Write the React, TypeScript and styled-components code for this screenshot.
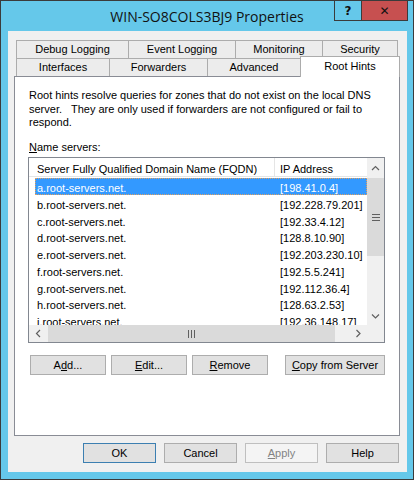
import React from 'react';
import styled, { createGlobalStyle, css } from 'styled-components';

const Global = createGlobalStyle`
  html, body { margin: 0; padding: 0; background: #ffffff; }
  body {
    font-family: "Liberation Sans", Arial, sans-serif;
    font-size: 11px;
    color: #000;
  }
  * { box-sizing: border-box; }
`;

const Window = styled.div`
  width: 414px;
  height: 480px;
  background: #65c8ea;
  border: 1px solid #3b3b3b;
  display: flex;
  flex-direction: column;
`;

const TitleBar = styled.div`
  height: 30px;
  display: grid;
  grid-template-columns: 1fr auto 1fr;
`;

const Title = styled.div`
  grid-column: 2;
  font-family: "Open Sans", "Noto Sans", sans-serif;
  font-size: 14px;
  line-height: 30px;
  color: #111;
  white-space: nowrap;
  padding-top: 1px;
`;

const Controls = styled.div`
  grid-column: 3;
  justify-self: end;
  align-self: start;
  margin-right: 5px;
  display: flex;
  border: 1px solid #3b3b3b;
  border-top: none;
  height: 20px;
`;

const CtrlButton = styled.div<{ $close?: boolean }>`
  width: ${(p) => (p.$close ? 45 : 27)}px;
  height: 19px;
  display: flex;
  align-items: center;
  justify-content: center;
  background: ${(p) => (p.$close ? '#c75050' : 'transparent')};
  ${(p) =>
    !p.$close &&
    css`
      border-right: 1px solid #3b3b3b;
    `}
  font-family: "DejaVu Sans", sans-serif;
  font-weight: bold;
  font-size: 12px;
  color: #111;
`;

const Client = styled.div`
  margin: 0 6px 7px 7px;
  height: 441px;
  background: #f0f0f0;
  padding: 9px 7px 9px 6px;
  display: flex;
  flex-direction: column;
`;

const TabStrip = styled.div`
  margin-left: 2px;
  display: flex;
  flex-direction: column;
`;

const TabRow = styled.div`
  display: flex;
  align-items: flex-start;
  height: 18px;
`;

const Tab = styled.div<{ $w: number; $active?: boolean }>`
  width: ${(p) => p.$w}px;
  height: 18px;
  margin-right: -1px;
  border: 1px solid #acacac;
  border-bottom: none;
  background: #ececec;
  text-align: center;
  line-height: 17px;
  white-space: nowrap;
  ${(p) =>
    p.$active &&
    css`
      position: relative;
      z-index: 1;
      height: 21px;
      margin-top: -2px;
      margin-bottom: -1px;
      background: #ffffff;
      line-height: 18px;
    `}
`;

const Panel = styled.div`
  height: 360px;
  background: #ffffff;
  border: 1px solid #898c95;
  padding: 12px 14px 0 13px;
  display: flex;
  flex-direction: column;
`;

const Description = styled.div`
  padding-left: 1px;
  line-height: 13.5px;
  white-space: pre;
`;

const Label = styled.div`
  margin-top: 11px;
  padding-left: 1px;
  line-height: 13px;
`;

const ListBox = styled.div`
  margin-top: 3.5px;
  width: 357px;
  height: 186px;
  border: 1px solid #828790;
  display: grid;
  grid-template-columns: 1fr 17px;
  grid-template-rows: 1fr 17px;
  background: #fff;
`;

const Viewport = styled.div`
  overflow: hidden;
  display: flex;
  flex-direction: column;
`;

const HeaderRow = styled.div`
  display: grid;
  grid-template-columns: 246px 1fr;
  height: 19px;
  border-bottom: 1px solid #e5e5e5;
  flex-shrink: 0;
`;

const HeaderCell = styled.div<{ $first?: boolean }>`
  padding: 5px 0 0 ${(p) => (p.$first ? 8 : 5)}px;
  line-height: 13px;
  white-space: nowrap;
  ${(p) =>
    p.$first &&
    css`
      border-right: 1px solid #e5e5e5;
    `}
`;

const Rows = styled.div`
  margin-top: 1px;
  display: flex;
  flex-direction: column;
`;

const Row = styled.div<{ $selected?: boolean }>`
  margin-left: 6px;
  height: 16.75px;
  flex-shrink: 0;
  display: grid;
  grid-template-columns: 239px 1fr;
  align-items: center;
  white-space: nowrap;
  border: 1px solid transparent;
  ${(p) =>
    p.$selected &&
    css`
      background: #3399ff;
      color: #fff;
      border: 1px dotted #e0a060;
    `}
`;

const Cell = styled.div<{ $ip?: boolean }>`
  padding-left: ${(p) => (p.$ip ? 5 : 1)}px;
  line-height: 13px;
  padding-top: 3px;
`;

const VScroll = styled.div`
  display: flex;
  flex-direction: column;
  background: #f0f0f0;
`;

const HScroll = styled.div`
  display: flex;
  background: #f0f0f0;
`;

const ArrowBtn = styled.div<{ $w?: number; $h?: number }>`
  width: ${(p) => (p.$w ? `${p.$w}px` : '100%')};
  height: ${(p) => (p.$h ? `${p.$h}px` : '100%')};
  flex-shrink: 0;
  display: flex;
  align-items: center;
  justify-content: center;
  background: #f0f0f0;
`;

const Thumb = styled.div<{ $w?: number; $h?: number }>`
  width: ${(p) => (p.$w ? `${p.$w}px` : '100%')};
  height: ${(p) => (p.$h ? `${p.$h}px` : '100%')};
  flex-shrink: 0;
  background: #dadada;
  display: flex;
  align-items: center;
  justify-content: center;
`;

const Track = styled.div`
  flex: 1;
`;

const Corner = styled.div`
  background: #f0f0f0;
`;

const ButtonRow = styled.div`
  margin-top: 12px;
  margin-left: 2px;
  display: flex;
  gap: 5px;
  width: 355px;
`;

const Button = styled.button<{ $w: number; $push?: boolean; $default?: boolean; $disabled?: boolean }>`
  width: ${(p) => p.$w}px;
  height: 20px;
  padding: 0;
  margin: 0;
  ${(p) =>
    p.$push &&
    css`
      margin-left: auto;
    `}
  background: #e1e1e1;
  border: 1px solid ${(p) => (p.$default ? '#3c7fb1' : '#adadad')};
  font-family: "Liberation Sans", Arial, sans-serif;
  font-size: 11px;
  color: #000;
  line-height: 18px;
  ${(p) =>
    p.$disabled &&
    css`
      background: #f4f4f4;
      border-color: #bfbfbf;
      color: #838383;
    `}
`;

const DialogButtons = styled.div`
  margin-top: 7px;
  margin-right: 1px;
  display: flex;
  justify-content: flex-end;
  gap: 8px;
`;

const Chevron = ({ dir }: { dir: 'up' | 'down' | 'left' | 'right' }) => {
  const pts: Record<string, string> = {
    up: '1,5 4.5,1.5 8,5',
    down: '1,1.5 4.5,5 8,1.5',
    left: '5,1 1.5,4.5 5,8',
    right: '1.5,1 5,4.5 1.5,8',
  };
  const vertical = dir === 'up' || dir === 'down';
  return (
    <svg width={vertical ? 9 : 7} height={vertical ? 7 : 9} viewBox={vertical ? '0 0 9 7' : '0 0 7 9'}>
      <polyline points={pts[dir]} fill="none" stroke="#606060" strokeWidth="1.2" />
    </svg>
  );
};

const Grip = ({ vertical }: { vertical?: boolean }) =>
  vertical ? (
    <svg width="8" height="7" viewBox="0 0 8 7">
      <path d="M0 0.5h8M0 3.5h8M0 6.5h8" stroke="#606060" strokeWidth="1" />
    </svg>
  ) : (
    <svg width="7" height="8" viewBox="0 0 7 8">
      <path d="M0.5 0v8M3.5 0v8M6.5 0v8" stroke="#606060" strokeWidth="1" />
    </svg>
  );

const servers: [string, string][] = [
  ['a.root-servers.net.', '[198.41.0.4]'],
  ['b.root-servers.net.', '[192.228.79.201]'],
  ['c.root-servers.net.', '[192.33.4.12]'],
  ['d.root-servers.net.', '[128.8.10.90]'],
  ['e.root-servers.net.', '[192.203.230.10]'],
  ['f.root-servers.net.', '[192.5.5.241]'],
  ['g.root-servers.net.', '[192.112.36.4]'],
  ['h.root-servers.net.', '[128.63.2.53]'],
  ['i.root-servers.net.', '[192.36.148.17]'],
];

export default function App() {
  return (
    <>
      <Global />
      <Window>
        <TitleBar>
          <Title>WIN-SO8COLS3BJ9 Properties</Title>
          <Controls>
            <CtrlButton>?</CtrlButton>
            <CtrlButton $close>✕</CtrlButton>
          </Controls>
        </TitleBar>
        <Client>
          <TabStrip>
            <TabRow>
              <Tab $w={113}>Debug Logging</Tab>
              <Tab $w={108}>Event Logging</Tab>
              <Tab $w={88}>Monitoring</Tab>
              <Tab $w={76}>Security</Tab>
            </TabRow>
            <TabRow>
              <Tab $w={94}>Interfaces</Tab>
              <Tab $w={99}>Forwarders</Tab>
              <Tab $w={94}>Advanced</Tab>
              <Tab $w={100} $active>
                Root Hints
              </Tab>
            </TabRow>
          </TabStrip>
          <Panel>
            <Description>
              {'Root hints resolve queries for zones that do not exist on the local DNS\nserver.   They are only used if forwarders are not configured or fail to\nrespond.'}
            </Description>
            <Label>
              <u>N</u>ame servers:
            </Label>
            <ListBox>
              <Viewport>
                <HeaderRow>
                  <HeaderCell $first>Server Fully Qualified Domain Name (FQDN)</HeaderCell>
                  <HeaderCell>IP Address</HeaderCell>
                </HeaderRow>
                <Rows>
                  {servers.map(([name, ip], i) => (
                    <Row key={name} $selected={i === 0}>
                      <Cell>{name}</Cell>
                      <Cell $ip>{ip}</Cell>
                    </Row>
                  ))}
                </Rows>
              </Viewport>
              <VScroll>
                <ArrowBtn $h={20}>
                  <Chevron dir="up" />
                </ArrowBtn>
                <Thumb $h={78}>
                  <Grip vertical />
                </Thumb>
                <Track />
                <ArrowBtn $h={17}>
                  <Chevron dir="down" />
                </ArrowBtn>
              </VScroll>
              <HScroll>
                <ArrowBtn $w={19}>
                  <Chevron dir="left" />
                </ArrowBtn>
                <Thumb $w={287}>
                  <Grip />
                </Thumb>
                <Track />
                <ArrowBtn $w={17}>
                  <Chevron dir="right" />
                </ArrowBtn>
              </HScroll>
              <Corner />
            </ListBox>
            <ButtonRow>
              <Button $w={76}>
                A<u>d</u>d...
              </Button>
              <Button $w={76}>
                <u>E</u>dit...
              </Button>
              <Button $w={76}>
                <u>R</u>emove
              </Button>
              <Button $w={100} $push>
                <u>C</u>opy from Server
              </Button>
            </ButtonRow>
          </Panel>
          <DialogButtons>
            <Button $w={73} $default>
              OK
            </Button>
            <Button $w={73}>Cancel</Button>
            <Button $w={73} $disabled>
              <u>A</u>pply
            </Button>
            <Button $w={73}>Help</Button>
          </DialogButtons>
        </Client>
      </Window>
    </>
  );
}
